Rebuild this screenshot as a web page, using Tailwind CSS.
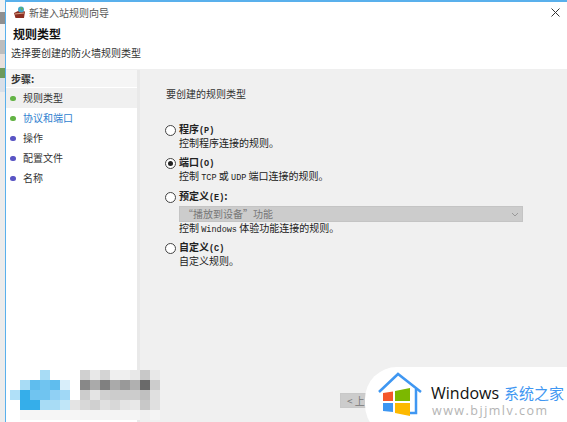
<!DOCTYPE html>
<html lang="zh-CN">
  <head>
    <meta charset="UTF-8" />
    <title>新建入站规则向导</title>
    <script src="https://cdn.jsdelivr.net/npm/@tailwindcss/browser@4"></script>
  </head>
  <body class="bg-white">
    <div class="relative flex h-[422px] w-[567px] overflow-hidden font-['Noto_Sans_CJK_SC','Noto_Sans',sans-serif] text-[10px] leading-[10px] text-[#222]">
      <!-- Desktop strip behind the window -->
      <div class="flex w-[5px] shrink-0 flex-col bg-[#e4e4e4]">
        <div class="h-[12px] bg-[#f2f2f2]"></div>
        <div class="h-[12px] bg-[#8f8f8f]"></div>
        <div class="h-[16px] bg-[#f4f4f4]"></div>
        <div class="h-[14px] bg-[#bdbdbd]"></div>
        <div class="h-[14px] bg-[#e8e0dc]"></div>
        <div class="h-[10px] bg-[#6d9a5b]"></div>
        <div class="h-[14px] bg-[#d8dfe8]"></div>
        <div class="grow bg-[#ececec]"></div>
      </div>

      <!-- Wizard window -->
      <div class="flex grow flex-col border-l border-t-2 border-[#59b0ec] bg-white">
        <!-- Title bar -->
        <div class="flex h-[21px] shrink-0 items-center pr-[7px] pl-[7px]">
          <svg class="h-[13px] w-[13px] shrink-0" viewBox="0 0 13 13">
            <path d="M1 7 L6 4.5 L12 5.5 L11 12 L2.5 12 Z" fill="#8c2f22" />
            <path d="M2 8 L11 7" stroke="#d9a184" stroke-width="1" />
            <circle cx="8" cy="3.5" r="3" fill="#3fa7c9" />
            <path d="M7 1 L10 2 L9 5 Z" fill="#66b356" />
          </svg>
          <span class="ml-[3px] text-[#555]">新建入站规则向导</span>
          <svg class="ml-auto h-[9px] w-[9px]" viewBox="0 0 9 9">
            <path d="M0.5 0.5 L8.5 8.5 M8.5 0.5 L0.5 8.5" stroke="#333" stroke-width="1" fill="none" />
          </svg>
        </div>

        <!-- Header -->
        <div class="h-[47px] shrink-0 border-b border-[#efefef] pl-[7px]">
          <div class="pt-[4px] text-[12px] leading-[14px] font-bold text-[#111]">规则类型</div>
          <div class="mt-[6px] -ml-[2px] leading-[12px] text-[#333]">选择要创建的防火墙规则类型</div>
        </div>

        <!-- Body -->
        <div class="flex grow">
          <!-- Steps -->
          <div class="w-[131px] shrink-0">
            <div class="flex h-[17px] items-center bg-[#f5f5f5] pl-[5px] font-bold text-[#333]">步骤:</div>
            <div class="mt-[1px] flex flex-col">
              <div class="flex h-[20px] items-center bg-[#f0f0f0] pl-[4px]">
                <span class="h-[5px] w-[6px] rounded-full bg-[#63b345]"></span>
                <span class="ml-[7px] text-[#333]">规则类型</span>
              </div>
              <div class="flex h-[20px] items-center pl-[4px]">
                <span class="h-[5px] w-[6px] rounded-full bg-[#63b345]"></span>
                <span class="ml-[7px] text-[#2f7fd0]">协议和端口</span>
              </div>
              <div class="flex h-[20px] items-center pl-[4px]">
                <span class="h-[5px] w-[6px] rounded-full bg-[#5a55c4]"></span>
                <span class="ml-[7px] text-[#333]">操作</span>
              </div>
              <div class="flex h-[20px] items-center pl-[4px]">
                <span class="h-[5px] w-[6px] rounded-full bg-[#5a55c4]"></span>
                <span class="ml-[7px] text-[#333]">配置文件</span>
              </div>
              <div class="flex h-[20px] items-center pl-[4px]">
                <span class="h-[5px] w-[6px] rounded-full bg-[#5a55c4]"></span>
                <span class="ml-[7px] text-[#333]">名称</span>
              </div>
            </div>
          </div>

          <!-- Options -->
          <div class="grow border-l-[3px] border-[#e9e9e9] bg-[#f0f0f0] pt-[19px] pl-[25px]">
            <div class="ml-[1px] text-[#333]">要创建的规则类型</div>

            <div class="mt-[25px] flex flex-col">
              <div class="h-[33px]">
                <label class="flex items-center gap-[3px] font-bold text-[#222]">
                  <span class="h-[11px] w-[11px] rounded-full border border-[#444] bg-white"></span>
                  <span>程序<span class="font-['Liberation_Mono',monospace] text-[8.5px]">(P)</span></span>
                </label>
                <div class="mt-[2px] ml-[14px]">控制程序连接的规则。</div>
              </div>
              <div class="h-[34px]">
                <label class="flex items-center gap-[3px] font-bold text-[#222]">
                  <span class="flex h-[11px] w-[11px] items-center justify-center rounded-full border border-[#444] bg-white">
                    <span class="h-[5px] w-[5px] rounded-full bg-[#222]"></span>
                  </span>
                  <span>端口<span class="font-['Liberation_Mono',monospace] text-[8.5px]">(O)</span></span>
                </label>
                <div class="mt-[2px] ml-[14px]">控制 <span class="font-['Liberation_Mono',monospace] text-[8.5px]">TCP</span> 或 <span class="font-['Liberation_Mono',monospace] text-[8.5px]">UDP</span> 端口连接的规则。</div>
              </div>
              <div class="h-[51px]">
                <label class="flex items-center gap-[3px] font-bold text-[#222]">
                  <span class="h-[11px] w-[11px] rounded-full border border-[#444] bg-white"></span>
                  <span>预定义<span class="font-['Liberation_Mono',monospace] text-[8.5px]">(E)</span>:</span>
                </label>
                <div class="mt-[3px] ml-[14px] flex h-[16px] w-[344px] items-center justify-between border border-[#c4c4c4] bg-[#cccccc] pr-[3px] pl-[3px] text-[#777]">
                  <span>“播放到设备”功能</span>
                  <svg class="h-[5px] w-[8px]" viewBox="0 0 8 5">
                    <path d="M1 1 L4 4 L7 1" stroke="#999" stroke-width="1" fill="none" />
                  </svg>
                </div>
                <div class="mt-[1px] ml-[14px]">控制 <span class="font-['Liberation_Mono',monospace] text-[8.5px]">Windows</span> 体验功能连接的规则。</div>
              </div>
              <div>
                <label class="flex items-center gap-[3px] font-bold text-[#222]">
                  <span class="h-[11px] w-[11px] rounded-full border border-[#444] bg-white"></span>
                  <span>自定义<span class="font-['Liberation_Mono',monospace] text-[8.5px]">(C)</span></span>
                </label>
                <div class="mt-[2px] ml-[14px]">自定义规则。</div>
              </div>
            </div>

            <!-- Back button, mostly under the watermark -->
            <div class="absolute top-[393px] left-[340px] flex h-[15px] w-[40px] items-center border border-[#c8c8c8] bg-[#cccccc] pl-[6px] text-[#777]">&lt; 上</div>
          </div>
        </div>
      </div>

      <!-- Mosaic over the bottom left -->
      <div class="absolute top-[370px] left-[0px] grid grid-cols-[repeat(16,10px)] grid-rows-[repeat(5,10px)]">
        <i></i><i></i><i></i><i></i><i class="bg-[#a8dcf5]"></i><i></i><i></i><i></i><i class="bg-[#d0d0d0]"></i><i class="bg-[#e8e8e8]"></i><i class="bg-[#d4d4d4]"></i><i class="bg-[#efefef]"></i><i class="bg-[#efefef]"></i><i class="bg-[#e8e8e8]"></i><i class="bg-[#c8c8c8]"></i><i class="bg-[#e8e8e8]"></i>
        <i></i><i></i><i class="bg-[#a8dcf5]"></i><i class="bg-[#5fbdee]"></i><i class="bg-[#70c4f0]"></i><i class="bg-[#5fbdee]"></i><i class="bg-[#d8eefa]"></i><i></i><i class="bg-[#888888]"></i><i class="bg-[#aaaaaa]"></i><i class="bg-[#808080]"></i><i class="bg-[#aaaaaa]"></i><i class="bg-[#999999]"></i><i class="bg-[#b0b0b0]"></i><i class="bg-[#6a6a6a]"></i><i class="bg-[#cccccc]"></i>
        <i></i><i class="bg-[#b0e0f8]"></i><i class="bg-[#35aeea]"></i><i class="bg-[#70c4f0]"></i><i class="bg-[#70c4f0]"></i><i class="bg-[#90d0f4]"></i><i class="bg-[#a0d8f6]"></i><i></i><i class="bg-[#cccccc]"></i><i class="bg-[#e4e4e4]"></i><i class="bg-[#d0d0d0]"></i><i class="bg-[#cccccc]"></i><i class="bg-[#cccccc]"></i><i class="bg-[#cccccc]"></i><i class="bg-[#c0c0c0]"></i><i class="bg-[#e0e0e0]"></i>
        <i></i><i></i><i class="bg-[#35aeea]"></i><i class="bg-[#35aeea]"></i><i class="bg-[#a8dcf5]"></i><i class="bg-[#a8dcf5]"></i><i class="bg-[#c0e6f8]"></i><i class="bg-[#e4e4e4]"></i><i class="bg-[#d8d8d8]"></i><i class="bg-[#d0d0d0]"></i><i class="bg-[#e0e0e0]"></i><i class="bg-[#d8d8d8]"></i><i class="bg-[#e4e4e4]"></i><i class="bg-[#e8e8e8]"></i><i class="bg-[#c8c8c8]"></i><i class="bg-[#e0e0e0]"></i>
        <i></i><i></i><i class="bg-[#f6f6f6]"></i><i class="bg-[#f6f6f6]"></i><i class="bg-[#f6f6f6]"></i><i class="bg-[#f6f6f6]"></i><i class="bg-[#f6f6f6]"></i><i class="bg-[#f6f6f6]"></i><i class="bg-[#f4f4f4]"></i><i class="bg-[#f4f4f4]"></i><i class="bg-[#f4f4f4]"></i><i class="bg-[#f4f4f4]"></i><i class="bg-[#f4f4f4]"></i><i class="bg-[#f4f4f4]"></i><i class="bg-[#f0f0f0]"></i><i class="bg-[#f4f4f4]"></i>
      </div>

      <!-- Watermark badge -->
      <div class="absolute top-[367px] left-[365px] flex h-[70px] w-[210px] rounded-tl-[32px] rounded-bl-[32px] bg-white">
        <svg class="absolute top-[5px] left-[12px] h-[50px] w-[48px]" viewBox="0 0 48 50">
          <path d="M2 20 L21 2 L44 20" stroke="#3f97f2" stroke-width="2.5" fill="none" />
          <path d="M39 17 L39 41 L32 41" stroke="#3f97f2" stroke-width="2.5" fill="none" />
          <path d="M6 21 L16 19.5 L16 29 L6 29 Z" fill="#f4572a" />
          <path d="M18 19 L33 16 L33 29 L18 29 Z" fill="#7cb800" />
          <path d="M6 31 L16 31 L16 40 L6 39 Z" fill="#3c96f2" />
          <path d="M18 31 L33 31 L33 44 L18 41 Z" fill="#fdb900" />
        </svg>
        <div class="absolute top-[16px] left-[66px] whitespace-nowrap">
          <div class="flex items-center">
            <span class="font-['Open_Sans',sans-serif] text-[16px] leading-[20px] text-[#111]">Windows</span>
            <span class="ml-[5px] text-[15px] leading-[20px] text-[#3f97f2]">系统之家</span>
          </div>
          <div class="mt-[1px] ml-[1px] font-['Open_Sans',sans-serif] text-[12.5px] leading-[14px] tracking-[1.5px] text-[#b4b4b4]">www.bjjmlv.com</div>
        </div>
      </div>
    </div>
  </body>
</html>
